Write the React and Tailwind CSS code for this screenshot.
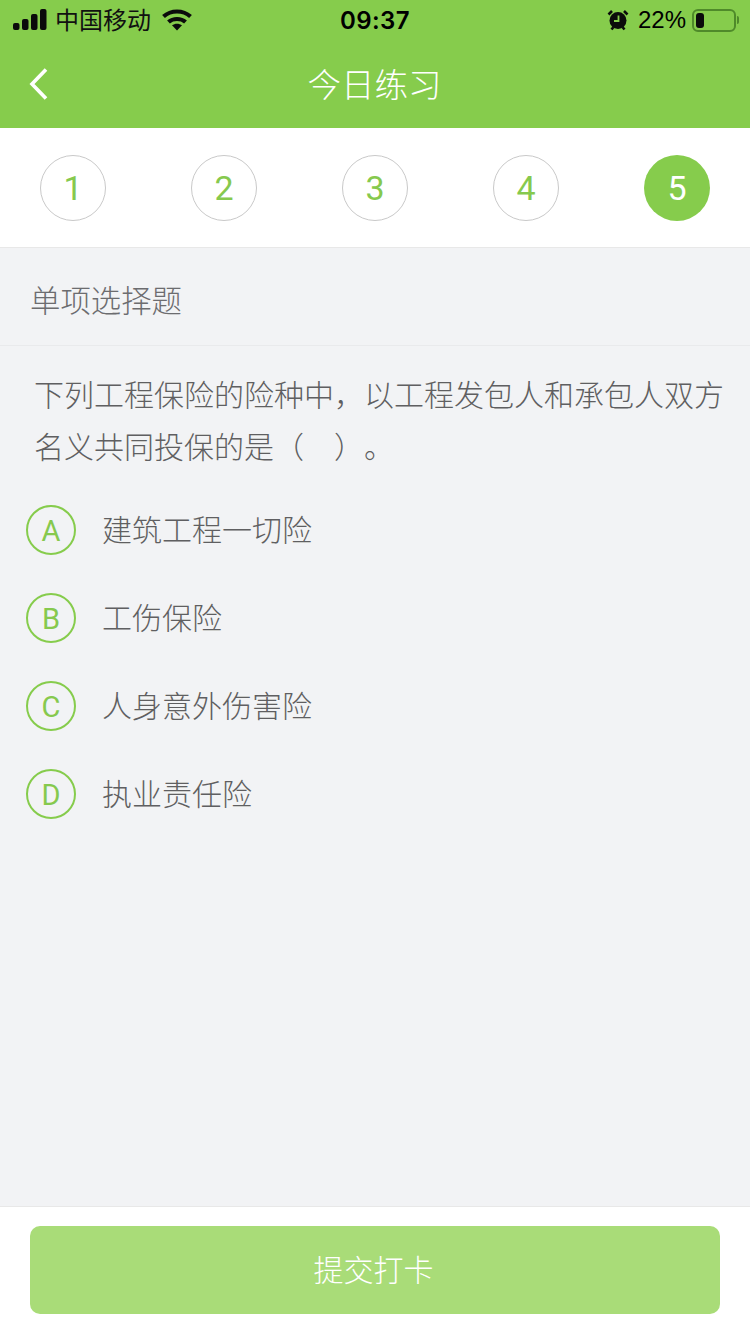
const sans = { fontFamily: '"Liberation Sans", "Noto Sans CJK SC", sans-serif' };
const inter = { fontFamily: 'Inter, "Liberation Sans", sans-serif' };
const roboto = { fontFamily: 'Roboto, "Liberation Sans", sans-serif' };
const cjk = { fontFamily: '"Noto Sans CJK SC", sans-serif' };

function StatusBar() {
  return (
    <div className="relative flex h-10 items-center justify-between text-black">
      <div className="flex items-center pl-[13px]">
        <svg width="34" height="22" viewBox="0 0 34 22" fill="#0b0b0b" className="mr-[8px]">
          <rect x="0" y="14" width="6.500" height="7" rx="2" />
          <rect x="9" y="10" width="6.500" height="11" rx="2" />
          <rect x="18" y="5" width="6.500" height="16" rx="2" />
          <rect x="27" y="0" width="6.500" height="21" rx="2" />
        </svg>
        <span className="relative top-[-1px] text-[24px] leading-none text-[#111]" style={cjk}>中国移动</span>
        <svg width="30" height="22" viewBox="0 0 30 22" className="ml-[11px]" fill="none" stroke="#0b0b0b" strokeWidth="4.200">
          <path d="M1.500 7.500C9 .8 21 .8 28.500 7.500" />
          <path d="M6.500 13C11 9 19 9 23.500 13" />
          <path d="M15 21.500l-5-5.200c2.800-2.200 7.200-2.200 10 0z" fill="#0b0b0b" stroke="none" />
        </svg>
      </div>
      <span className="absolute left-[340px] top-[6px] text-[24px] leading-[30px] font-semibold tracking-[0.4px]" style={inter}>09:37</span>
      <div className="flex items-center pr-[11px]">
        <svg width="22" height="22" viewBox="0 0 22 22" className="mr-[9px]">
          <circle cx="11" cy="11.500" r="8.500" fill="#0b0b0b" />
          <path d="M11.500 6.500v5.500H7" fill="none" stroke="#86cc4c" strokeWidth="1.800" />
          <path d="M1.500 5.500l3.500-3.500M20.500 5.500l-3.500-3.500M4.500 20.500l2-2.500M17.500 20.500l-2-2.500" stroke="#0b0b0b" strokeWidth="2.600" />
        </svg>
        <span className="text-[24px] leading-none" style={sans}>22%</span>
        <div className="ml-[6px] flex h-[23px] w-[44px] items-center rounded-[6px] border-2 border-[#4f8a2a] p-[2px]">
          <div className="h-[15px] w-[8px] rounded-[3px] bg-[#0b0b0b]" />
        </div>
        <div className="ml-[1px] h-[8px] w-[2px] rounded-r-full bg-[#4f8a2a]" />
      </div>
    </div>
  );
}

function Step({ n, active }) {
  return (
    <div
      className={
        active
          ? "flex h-[66px] w-[66px] items-center justify-center rounded-full bg-[#86cc4c] pt-[1px] text-[34px] font-normal text-white"
          : "flex h-[66px] w-[66px] items-center justify-center rounded-full border border-[#c9c9c9] pt-[1px] text-[34px] font-normal text-[#86c94e]"
      }
      style={roboto}
    >
      {n}
    </div>
  );
}

function Option({ letter, text }) {
  return (
    <div className="relative flex h-[88px] items-center pl-[26px]">
      <div className="relative top-[2px] flex h-[50px] w-[50px] items-center justify-center rounded-full border-2 border-[#86cc4c] pt-[3px] text-[29px] font-normal text-[#86c94e]" style={roboto}>
        {letter}
      </div>
      <span className="ml-[26px] text-[30px] leading-none font-light text-[#5f5f61]" style={cjk}>{text}</span>
    </div>
  );
}

export default function App() {
  return (
    <div className="flex h-[1334px] w-[750px] flex-col overflow-hidden bg-[#f2f3f5]" style={cjk}>
      <header className="h-[128px] bg-[#86cc4c]">
        <StatusBar />
        <div className="relative flex h-[88px] items-center justify-center pb-[2px]">
          <svg width="24" height="34" viewBox="0 0 24 34" className="absolute left-[27px] top-[27px]" fill="none" stroke="#fff" strokeWidth="3.600">
            <path d="M19 2.500 5 17l14 14.500" />
          </svg>
          <span className="pr-[1px] text-[33.500px] leading-none font-light text-white">今日练习</span>
        </div>
      </header>
      <div className="flex h-[120px] items-center justify-between border-b border-[#e8e8e8] bg-white px-10">
        {[1, 2, 3, 4].map((n) => <Step key={n} n={n} />)}
        <Step n={5} active />
      </div>
      <div className="flex h-[98px] items-center border-b border-[#e9eaec] pl-[30px] pt-[6px] text-[30.400px] leading-none font-light text-[#6c6c6f]">单项选择题</div>
      <p className="pl-[34px] pr-[20px] pt-[21px] text-[30px] leading-[52px] font-light text-[#5f5f61] [text-spacing-trim:space-all]">下列工程保险的险种中，以工程发包人和承包人双方名义共同投保的是（　）。</p>
      <div className="mt-[13px] flex-1">
        <Option letter="A" text="建筑工程一切险" />
        <Option letter="B" text="工伤保险" />
        <Option letter="C" text="人身意外伤害险" />
        <Option letter="D" text="执业责任险" />
      </div>
      <div className="h-[128px] border-t border-[#e8e8e8] bg-white px-[30px] pt-[19px]">
        <button className="flex h-[88px] w-full items-center justify-center rounded-[10px] bg-[#a9dc78] pb-[4px] pr-[3px] text-[30px] font-light text-white">提交打卡</button>
      </div>
    </div>
  );
}
